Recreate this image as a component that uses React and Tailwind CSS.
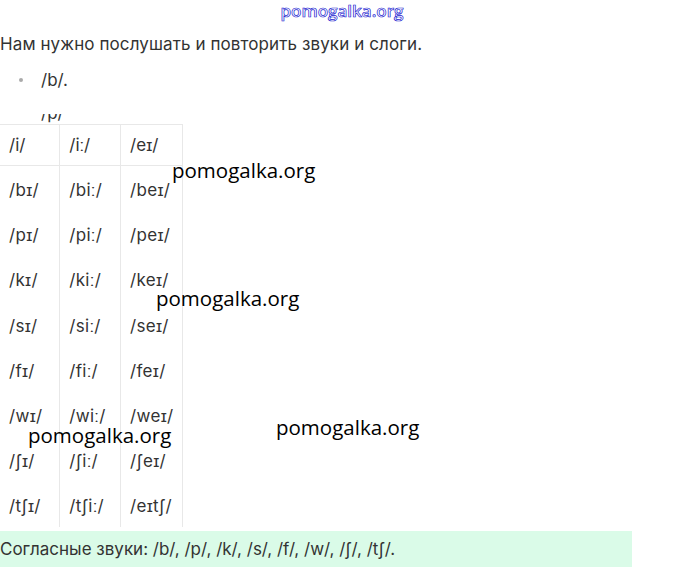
const rows = [
  ["/bɪ/", "/biː/", "/beɪ/"],
  ["/pɪ/", "/piː/", "/peɪ/"],
  ["/kɪ/", "/kiː/", "/keɪ/"],
  ["/sɪ/", "/siː/", "/seɪ/"],
  ["/fɪ/", "/fiː/", "/feɪ/"],
  ["/wɪ/", "/wiː/", "/weɪ/"],
  ["/ʃɪ/", "/ʃiː/", "/ʃeɪ/"],
  ["/tʃɪ/", "/tʃiː/", "/eɪtʃ/"],
];

function Mark({ className }) {
  return (
    <span className={`pointer-events-none absolute z-20 font-['Open_Sans',sans-serif] text-[20.5px] leading-none text-black ${className}`}>
      pomogalka.org
    </span>
  );
}

export default function App() {
  return (
    <div className="relative h-[567px] w-[680px] overflow-hidden bg-white font-['Inter',sans-serif] text-[#333]">
      <div className="flex h-[24px] justify-center pl-[4px] pt-[2px]">
        <span className="font-['Open_Sans',sans-serif] text-[17px] font-semibold leading-none text-transparent [-webkit-text-stroke:0.7px_#2020d0]">
          pomogalka.org
        </span>
      </div>

      <p className="mt-[9px] text-[17px] leading-[22px] tracking-[0.1px]">
        Нам нужно послушать и повторить звуки и слоги.
      </p>

      <ul className="mt-[14px] pl-[41px] text-[17px] leading-[22px]">
        <li className="relative">
          <span className="absolute left-[-22px] top-[9px] h-[4px] w-[4px] rounded-full bg-[#aaa]" />
          /b/.
        </li>
        <li className="mt-[23px] flex h-[10px] items-end overflow-hidden">
          <span className="shrink-0">/p/</span>
        </li>
      </ul>

      <table className="w-[183px] border-collapse bg-white text-[17px] leading-[22px]">
        <thead>
          <tr className="h-[41px] border-y border-[#e8e8e8]">
            <td className="w-[60px] border-r border-[#e8e8e8] pl-[9px]">/i/</td>
            <td className="w-[61px] border-r border-[#e8e8e8] pl-[9px]">/iː/</td>
            <td className="w-[62px] border-r border-[#e8e8e8] pl-[9px]">/eɪ/</td>
          </tr>
        </thead>
        <tbody>
          {rows.map((r, i) => (
            <tr key={i} className="h-[45.2px]">
              {r.map((c, j) => (
                <td key={j} className="border-r border-[#e8e8e8] pl-[9px] pt-[4px] tracking-[0.3px]">
                  {c}
                </td>
              ))}
            </tr>
          ))}
        </tbody>
      </table>

      <div className="mt-[4px] flex h-[40px] w-[632px] items-center bg-[#dafbe8] pb-[4px]">
        <span className="text-[17px] leading-[22px]">
          Согласные звуки: /b/, /p/, /k/, /s/, /f/, /w/, /ʃ/, /tʃ/.
        </span>
      </div>

      <Mark className="left-[172px] top-[160px]" />
      <Mark className="left-[156px] top-[288px]" />
      <Mark className="left-[28px] top-[425px]" />
      <Mark className="left-[276px] top-[417px]" />
    </div>
  );
}
